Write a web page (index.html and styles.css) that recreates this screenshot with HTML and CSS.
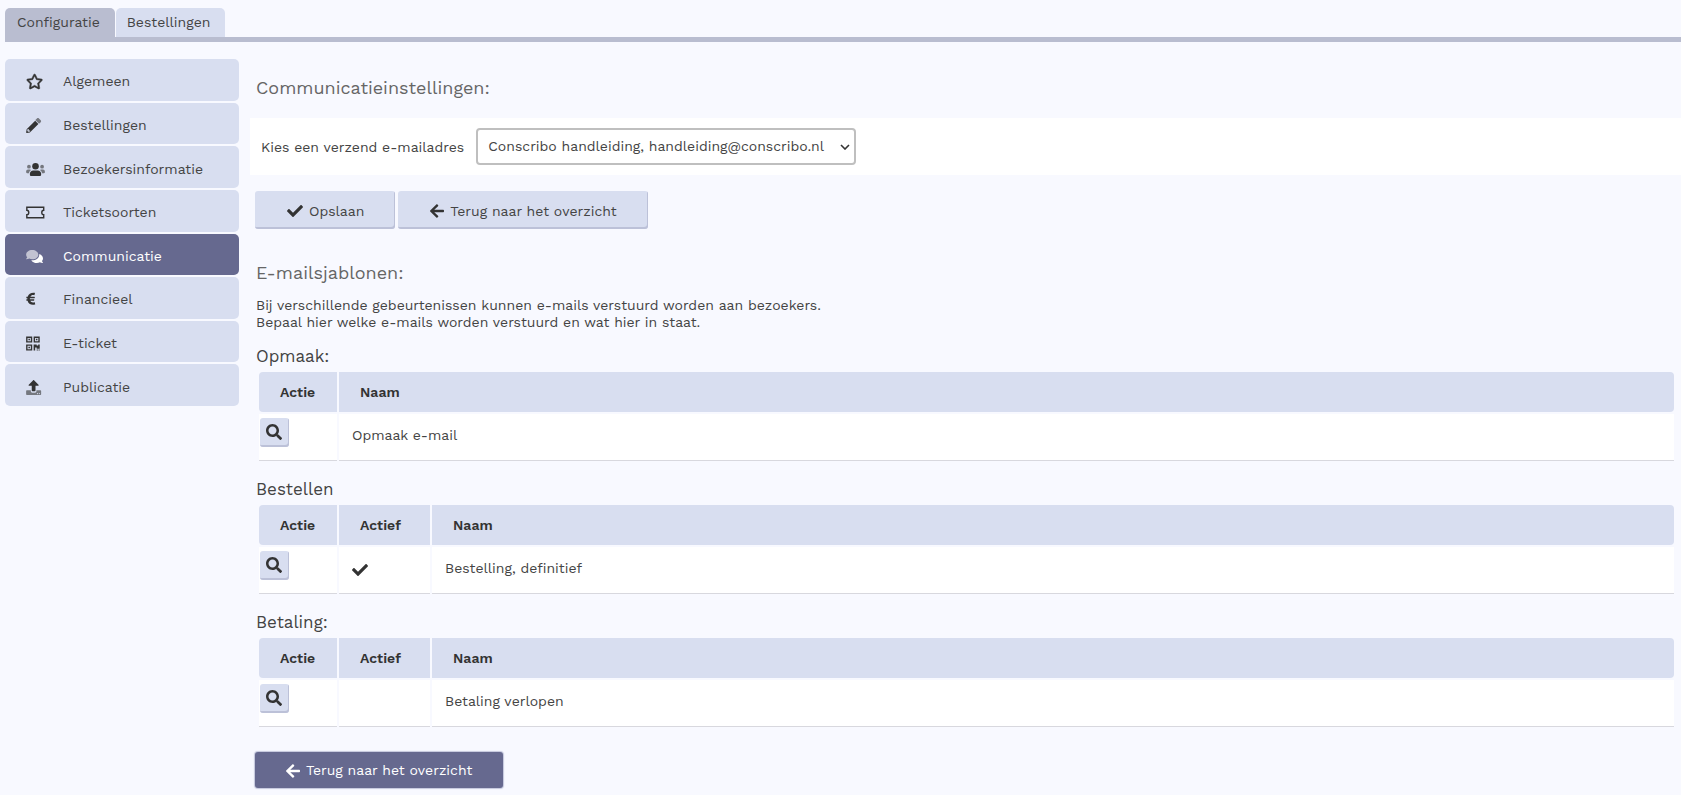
FILE: index.html
```html
<!DOCTYPE html>
<html lang="nl">
<head>
    <meta charset="UTF-8">
    <meta name="viewport" content="width=device-width, initial-scale=1.0">
    <title>Communicatie</title>
    <link rel="stylesheet" href="styles.css">
</head>
<body>

    <svg class="sprite" aria-hidden="true">
        <symbol id="check" viewBox="0 0 512 512">
            <path d="M173.898 439.404l-166.4-166.4c-9.997-9.997-9.997-26.206 0-36.204l36.203-36.204c9.997-9.998 26.207-9.998 36.204 0L192 312.69 432.095 72.596c9.997-9.997 26.207-9.997 36.204 0l36.203 36.204c9.997 9.997 9.997 26.206 0 36.204l-294.4 294.401c-9.998 9.997-26.207 9.997-36.204-.001z"/>
        </symbol>
        <symbol id="arrow" viewBox="0 0 448 512">
            <path d="M257.5 445.1l-22.2 22.2c-9.4 9.4-24.6 9.4-33.9 0L7 273c-9.4-9.4-9.4-24.6 0-33.9L201.4 44.7c9.4-9.4 24.6-9.4 33.9 0l22.2 22.2c9.5 9.5 9.3 25-.4 34.3L136.6 216H424c13.3 0 24 10.7 24 24v32c0 13.3-10.7 24-24 24H136.6l120.5 114.8c9.8 9.3 10 24.8.4 34.3z"/>
        </symbol>
        <symbol id="search" viewBox="0 0 512 512">
            <path d="M505 442.7L405.3 343c-4.5-4.5-10.6-7-17-7H372c27.6-35.3 44-79.7 44-128C416 93.1 322.9 0 208 0S0 93.1 0 208s93.1 208 208 208c48.3 0 92.7-16.4 128-44v16.3c0 6.4 2.5 12.5 7 17l99.7 99.7c9.4 9.4 24.6 9.4 33.9 0l28.3-28.3c9.4-9.4 9.4-24.6.1-34zM208 336c-70.7 0-128-57.2-128-128 0-70.7 57.2-128 128-128 70.7 0 128 57.2 128 128 0 70.7-57.2 128-128 128z"/>
        </symbol>
    </svg>

    <nav class="tabs">
        <a href="#" class="tab tab-active">Configuratie</a>
        <a href="#" class="tab">Bestellingen</a>
    </nav>

    <div class="page">
        <nav class="menu">
            <a href="#" class="menu-item">
                <svg class="menu-icon" viewBox="0 0 640 512"><path class="star" d="M528.1 171.5L382 150.2 316.7 17.8c-11.7-23.6-45.6-23.9-57.4 0L194 150.2 47.9 171.5c-26.2 3.8-36.7 36.1-17.7 54.6l105.7 103-25 145.5c-4.5 26.3 23.2 46 46.4 33.7L288 439.6l130.7 68.7c23.2 12.2 50.9-7.4 46.4-33.7l-25-145.5 105.7-103c19-18.5 8.5-50.8-17.7-54.6zM388.6 312.3l23.7 138.4L288 385.4l-124.3 65.3 23.7-138.4-100.6-98 139-20.2 62.2-126 62.2 126 139 20.2-100.6 98z"/></svg>
                Algemeen
            </a>
            <a href="#" class="menu-item">
                <svg class="menu-icon" viewBox="0 0 640 512"><path class="faded" d="M498 142l-46 46c-5 5-13 5-17 0L324 77c-5-5-5-12 0-17l46-46c19-19 49-19 68 0l60 60c19 19 19 49 0 68z"/><path d="M301 100L18 383 0 485c-3 16 9 29 25 27l102-18 284-284c5-5 5-12 0-17L318 100c-5-5-12-5-17 0zM88 424h48v36l-64 12-32-32 12-64h36z"/></svg>
                Bestellingen
            </a>
            <a href="#" class="menu-item">
                <svg class="menu-icon" viewBox="0 0 640 512"><g class="faded"><circle cx="96" cy="160" r="64"/><circle cx="544" cy="160" r="64"/><path d="M64 256h64c18 0 34 7 45 19-40 22-69 62-75 109H32c-18 0-32-14-32-32v-32c0-35 29-64 64-64zM576 256h-64c-18 0-34 7-45 19 40 22 69 62 75 109h66c18 0 32-14 32-32v-32c0-35-29-64-64-64z"/></g><circle cx="320" cy="144" r="112"/><path d="M243 288h154c64 0 115 52 115 115v29c0 27-21 48-48 48H176c-27 0-48-21-48-48v-29c0-63 51-115 115-115z"/></svg>
                Bezoekersinformatie
            </a>
            <a href="#" class="menu-item">
                <svg class="menu-icon" viewBox="0 0 640 512"><path class="outline" d="M24 76h576v104c-30 0-66 30-66 76s36 76 66 76v104H24V332c30 0 66-30 66-76s-36-76-66-76z"/></svg>
                Ticketsoorten
            </a>
            <a href="#" class="menu-item menu-active">
                <svg class="menu-icon" viewBox="0 0 640 512"><path class="faded" d="M416 192c0-88-93-160-208-160S0 104 0 192c0 34 14 66 38 92-13 30-35 54-36 55-2 2-3 5-1 8 1 3 4 5 7 5 40 0 74-14 98-28 30 18 65 28 102 28 115 0 208-72 208-160z"/><path d="M538 412c24-27 38-58 38-92 0-67-54-124-130-148 1 7 2 13 2 20 0 105-108 192-240 192-11 0-21-1-32-2 32 58 107 98 192 98 37 0 72-10 102-28 24 14 58 28 98 28 3 0 6-2 7-5s1-6-1-8c-1-1-23-25-36-55z"/></svg>
                Communicatie
            </a>
            <a href="#" class="menu-item">
                <svg class="menu-icon" viewBox="0 0 640 512"><path d="M310 414l-14-54c-2-8-9-12-17-10-70 17-117-3-135-50h117c6 0 11-4 12-10l7-30c2-7-4-14-12-14H128v-30h152c6 0 11-4 12-10l7-32c1-7-4-14-12-14H147c20-44 62-65 126-53 7 1 13-3 15-10l13-54c2-7-3-14-10-16C179 10 83 65 53 160H20c-7 0-12 5-12 12v32c0 7 5 12 12 12h22v30H20c-7 0-12 5-12 12v30c0 7 5 12 12 12h30c22 112 127 154 251 128 7-1 11-8 9-14z"/></svg>
                Financieel
            </a>
            <a href="#" class="menu-item">
                <svg class="menu-icon" viewBox="0 0 640 512"><path fill-rule="evenodd" d="M0 224h208V16H0zM48 64h112v112H48zM256 16v208h208V16zm160 160H304V64h112zM0 496h208V288H0zm48-160h112v112H48zM78 94h52v52H78zM334 94h52v52h-52zM78 366h52v52H78zM256 288h104v32h52v-32h52v144H360v-40h-52v104h-52zM360 460h40v36h-40zM424 460h40v36h-40z"/></svg>
                E-ticket
            </a>
            <a href="#" class="menu-item">
                <svg class="menu-icon" viewBox="0 0 640 512"><path class="faded" d="M488 352H352v32c0 26-22 48-48 48h-96c-26 0-48-22-48-48v-32H24c-13 0-24 11-24 24v112c0 13 11 24 24 24h464c13 0 24-11 24-24V376c0-13-11-24-24-24zM388 484a20 20 0 1 1 0-40 20 20 0 0 1 0 40zm64 0a20 20 0 1 1 0-40 20 20 0 0 1 0 40z"/><path d="M296 384h-80c-13 0-24-11-24-24V192h-88c-18 0-27-21-14-34L242 6c7-8 20-8 28 0l152 152c13 13 4 34-14 34h-88v168c0 13-11 24-24 24z"/></svg>
                Publicatie
            </a>
        </nav>

        <main class="content">
            <h1>Communicatieinstellingen:</h1>

            <form action="" class="mail-form">
                <div class="field">
                    <label for="sender">Kies een verzend e-mailadres</label>
                    <select id="sender">
                        <option>Conscribo handleiding, handleiding@conscribo.nl</option>
                    </select>
                </div>
                <div class="buttons">
                    <button class="btn"><svg class="icon"><use href="#check"/></svg>Opslaan</button>
                    <button type="button" class="btn"><svg class="icon icon-arrow"><use href="#arrow"/></svg>Terug naar het overzicht</button>
                </div>
            </form>

            <h2>E-mailsjablonen:</h2>
            <p>Bij verschillende gebeurtenissen kunnen e-mails verstuurd worden aan bezoekers.<br>
            Bepaal hier welke e-mails worden verstuurd en wat hier in staat.</p>

            <h3>Opmaak:</h3>
            <table>
                <thead>
                    <tr><th class="col-action">Actie</th><th>Naam</th></tr>
                </thead>
                <tbody>
                    <tr>
                        <td class="action"><button class="btn-view" aria-label="Bekijken"><svg class="icon"><use href="#search"/></svg></button></td>
                        <td>Opmaak e-mail</td>
                    </tr>
                </tbody>
            </table>

            <h3>Bestellen</h3>
            <table>
                <thead>
                    <tr><th class="col-action">Actie</th><th class="col-active">Actief</th><th>Naam</th></tr>
                </thead>
                <tbody>
                    <tr>
                        <td class="action"><button class="btn-view" aria-label="Bekijken"><svg class="icon"><use href="#search"/></svg></button></td>
                        <td class="state"><svg class="icon"><use href="#check"/></svg></td>
                        <td>Bestelling, definitief</td>
                    </tr>
                </tbody>
            </table>

            <h3>Betaling:</h3>
            <table>
                <thead>
                    <tr><th class="col-action">Actie</th><th class="col-active">Actief</th><th>Naam</th></tr>
                </thead>
                <tbody>
                    <tr>
                        <td class="action"><button class="btn-view" aria-label="Bekijken"><svg class="icon"><use href="#search"/></svg></button></td>
                        <td></td>
                        <td>Betaling verlopen</td>
                    </tr>
                </tbody>
            </table>

            <button class="btn btn-dark"><svg class="icon icon-arrow"><use href="#arrow"/></svg>Terug naar het overzicht</button>
        </main>
    </div>

</body>
</html>
```
FILE: styles.css
```css
* {
    margin: 0;
    padding: 0;
    box-sizing: border-box;
}
body {
    background: #f8f9ff;
    color: #444;
    font-family: 'Work Sans', Inter, sans-serif;
    font-size: 14px;
    line-height: 17px;
}
a {
    color: inherit;
    text-decoration: none;
}
svg {
    fill: #333;
}
.sprite {
    display: none;
}
.faded {
    opacity: 0.6;
}
.outline {
    fill: none;
    stroke: #333;
    stroke-width: 48px;
}
.star {
    stroke: #333;
    stroke-width: 16px;
}
.icon {
    width: 16px;
    height: 16px;
}
.icon-arrow {
    width: 14px;
}

/* tabs */
.tabs {
    display: flex;
    gap: 1px;
    margin-left: 5px;
    padding-top: 8px;
    border-bottom: 5px solid #b9bdd0;
}
.tab {
    padding: 6px 15px 6px 11px;
    background: #d8def0;
    border-radius: 5px 5px 0 0;
}
.tab-active {
    padding-left: 12px;
    background: #b9bdd0;
}

.page {
    display: flex;
    align-items: flex-start;
    gap: 11px;
    padding: 17px 0 8px 5px;
}

/* left menu */
.menu {
    display: grid;
    grid-auto-rows: 1fr;
    gap: 2px;
    flex: 0 0 234px;
    min-height: 347px;
}
.menu-item {
    display: flex;
    align-items: center;
    gap: 18px;
    padding: 4px 21px 0;
    background: #d8def0;
    border-radius: 5px;
}
.menu-icon {
    width: 19px;
    height: 15px;
    overflow: visible;
}
.menu-active {
    background: #66698f;
    color: #fff;
}
.menu-active svg {
    fill: #fff;
}

/* content */
.content {
    flex: 1;
    min-width: 0;
}
h1, h2 {
    padding-left: 6px;
    font-size: 18px;
    line-height: 24px;
    font-weight: 400;
    color: #666;
}
h1 {
    padding-top: 17px;
    margin-bottom: 18px;
}
h2 {
    margin: 32px 0 12px;
}
h3 {
    padding-left: 6px;
    margin-bottom: 4px;
    font-size: 17px;
    line-height: 20px;
    font-weight: 400;
}
p {
    padding-left: 6px;
    margin-bottom: 15px;
}
.field {
    display: flex;
    align-items: center;
    gap: 12px;
    padding: 10px 11px;
    background: #fff;
}
.field label {
    padding-top: 2px;
}
select {
    height: 37px;
    width: 380px;
    padding: 0 28px 0 10px;
    appearance: none;
    background: #fff url("data:image/svg+xml,%3Csvg xmlns='http://www.w3.org/2000/svg' width='10' height='6'%3E%3Cpath d='M1 1l4 4 4-4' fill='none' stroke='%23333' stroke-width='1.6'/%3E%3C/svg%3E") no-repeat right 4px center;
    border: 2px solid #bfbfbf;
    border-radius: 4px;
    font: inherit;
    color: inherit;
}
.buttons {
    display: flex;
    gap: 3px;
    margin: 16px 0 0 5px;
}
.btn {
    display: inline-flex;
    align-items: center;
    gap: 6px;
    height: 38px;
    padding: 2px 31px 0 32px;
    background: #d8def0;
    border: 0;
    border-radius: 3px;
    box-shadow: inset -1px -2px #bcc1d8;
    font: inherit;
    color: inherit;
}
.btn-dark {
    height: 36px;
    margin: 7px 0 0 5px;
    padding: 1px 31px 0;
    background: #66698f;
    box-shadow: 0 0 1px 1px #c3c6dc;
    color: #fff;
}
.btn-dark svg {
    fill: #fff;
}

/* tables */
table {
    width: calc(100% - 5px);
    padding-left: 7px;
    margin-bottom: 16px;
    border-spacing: 2px;
}
th {
    height: 40px;
    padding: 0 21px;
    background: #d8def0;
    text-align: left;
    font-weight: 600;
    color: #333;
}
th:first-child {
    border-radius: 4px 0 0 4px;
}
th:last-child {
    border-radius: 0 4px 4px 0;
}
.col-action {
    width: 78px;
    padding: 0 0 0 21px;
}
.col-active {
    width: 91px;
}
td {
    height: 47px;
    padding: 0 13px 4px;
    background: #fff;
    border-bottom: 1px solid #d8d8de;
}
.action {
    padding: 4px 1px 0;
    vertical-align: top;
}
.state {
    padding-top: 4px;
}
.state .icon {
    display: block;
}
.btn-view {
    display: flex;
    align-items: center;
    padding: 6px 7px 7px 6px;
    background: #d8def0;
    border: 0;
    border-radius: 3px;
    box-shadow: inset -1px -2px #bcc1d8;
}
```
